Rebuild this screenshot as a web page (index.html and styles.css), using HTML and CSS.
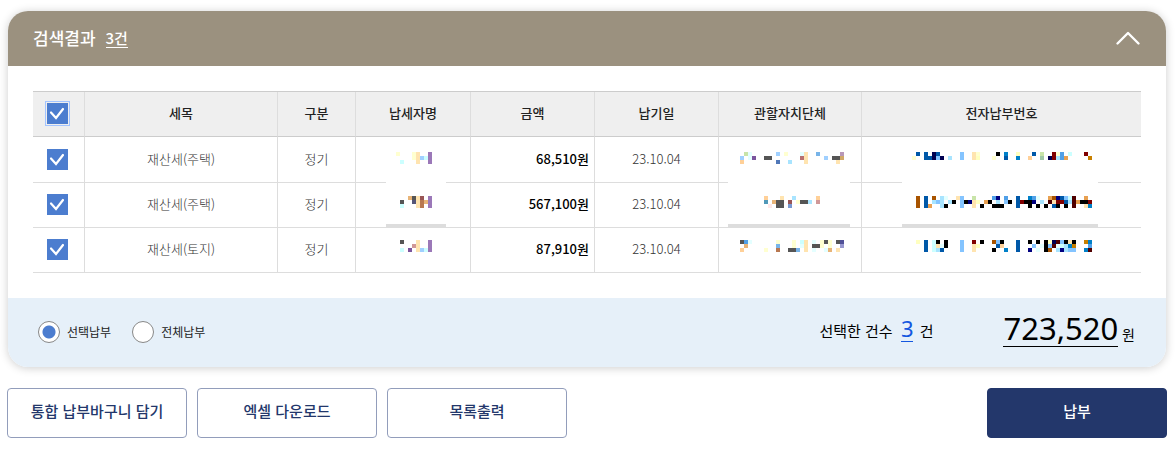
FILE: index.html
```html
<!DOCTYPE html>
<html lang="ko">

<head>
  <meta charset="utf-8">
  <meta name="viewport" content="width=device-width, initial-scale=1">
  <title>검색결과</title>
  <link rel="stylesheet" href="styles.css">
</head>

<body>
  <section class="panel">
    <header class="panel-head">
      <h2 class="title">검색결과</h2>
      <span class="count">3건</span>
      <button class="fold" aria-label="접기">
        <svg width="26" height="16" viewBox="0 0 26 16">
          <path d="M2.5 13.5 13 3 23.5 13.5" fill="none" stroke="#fff" stroke-width="2.4" stroke-linecap="round" stroke-linejoin="round"/>
        </svg>
      </button>
    </header>

    <div class="panel-body">
      <table class="tbl">
        <colgroup>
          <col class="col-check">
          <col class="col-item">
          <col class="col-kind">
          <col class="col-name">
          <col class="col-amount">
          <col class="col-date">
          <col class="col-office">
          <col>
        </colgroup>
        <thead>
          <tr>
            <th><input type="checkbox" class="check focused" aria-label="전체 선택" checked></th>
            <th>세목</th>
            <th>구분</th>
            <th>납세자명</th>
            <th>금액</th>
            <th>납기일</th>
            <th>관할자치단체</th>
            <th>전자납부번호</th>
          </tr>
        </thead>
        <tbody>
          <tr>
            <td><input type="checkbox" class="check" aria-label="선택" checked></td>
            <td>재산세(주택)</td>
            <td>정기</td>
            <td><svg class="mosaic" width="36" height="12" viewBox="-1 1 36 12" data-cells="name1"></svg></td>
            <td class="amount">68,510원</td>
            <td>23.10.04</td>
            <td><svg class="mosaic" width="104" height="12" viewBox="-2 1 104 12" data-cells="office1"></svg></td>
            <td><svg class="mosaic" width="180" height="12" viewBox="0 1 180 12" data-cells="number1"></svg></td>
          </tr>
          <tr>
            <td><input type="checkbox" class="check" aria-label="선택" checked></td>
            <td>재산세(주택)</td>
            <td>정기</td>
            <td>
              <svg class="mosaic" width="36" height="12" viewBox="-1 2 36 12" data-cells="name2">
                <path fill="#fff" d="M-10-16h60v44h-60z"/>
                <path fill="#ddd" d="M-10 28h60v3h-60z"/>
              </svg>
            </td>
            <td class="amount">567,100원</td>
            <td>23.10.04</td>
            <td>
              <svg class="mosaic" width="104" height="12" viewBox="-2 2 104 12" data-cells="office2">
                <path fill="#fff" d="M-12-16h122v44h-122z"/>
                <path fill="#ddd" d="M-12 28h122v3h-122z"/>
              </svg>
            </td>
            <td>
              <svg class="mosaic" width="180" height="12" viewBox="0 2 180 12" data-cells="number2">
                <path fill="#fff" d="M-10-16h196v44h-196z"/>
                <path fill="#ddd" d="M-10 28h196v3h-196z"/>
              </svg>
            </td>
          </tr>
          <tr>
            <td><input type="checkbox" class="check" aria-label="선택" checked></td>
            <td>재산세(토지)</td>
            <td>정기</td>
            <td><svg class="mosaic" width="36" height="12" viewBox="-1 3 36 12" data-cells="name3"></svg></td>
            <td class="amount">87,910원</td>
            <td>23.10.04</td>
            <td><svg class="mosaic" width="104" height="12" viewBox="-2 3 104 12" data-cells="office3"></svg></td>
            <td><svg class="mosaic" width="180" height="12" viewBox="0 3 180 12" data-cells="number3"></svg></td>
          </tr>
        </tbody>
      </table>
    </div>

    <footer class="panel-foot">
      <div class="options">
        <label class="option"><input type="radio" class="radio" name="pay" checked>선택납부</label>
        <label class="option"><input type="radio" class="radio" name="pay">전체납부</label>
      </div>
      <p class="picked">선택한 건수 <strong class="picked-num">3</strong> 건</p>
      <p class="total"><strong class="total-num">723,520</strong> 원</p>
    </footer>
  </section>

  <div class="actions">
    <button class="btn">통합 납부바구니 담기</button>
    <button class="btn">엑셀 다운로드</button>
    <button class="btn">목록출력</button>
    <button class="btn btn-pay">납부</button>
  </div>

  <script src="mosaic.js"></script>
</body>

</html>
```

FILE: styles.css
```css
* {
  box-sizing: border-box;
}

body {
  margin: 0;
  padding: 11px 8px 11px 7px;
  background: #fff;
  color: #222;
  font-family: "Noto Sans CJK KR", sans-serif;
  font-size: 13px;
  line-height: 20px;
}

button,
input {
  margin: 0;
  font-family: inherit;
}

.panel {
  margin: 0 1px;
  border-radius: 20px;
  overflow: hidden;
  background: #fff;
  box-shadow: 0 1px 10px rgba(0, 0, 0, 0.2);
}

.panel-head {
  display: flex;
  align-items: center;
  gap: 10px;
  height: 55px;
  padding: 0 25px 2px;
  background: #9b917f;
  color: #fff;
}

.title {
  margin: 0;
  font-size: 17px;
  font-weight: 500;
  line-height: 24px;
}

.count {
  border-bottom: 1px solid #fff;
  font-size: 15px;
  font-weight: 500;
  line-height: 19px;
}

.fold {
  display: flex;
  margin-left: auto;
  padding: 0;
  border: none;
  background: none;
  cursor: pointer;
}

.panel-body {
  padding: 25px;
}

.tbl {
  width: 100%;
  table-layout: fixed;
  border-collapse: separate;
  border-spacing: 0;
  border-top: 1px solid #ccc;
}

.col-check {
  width: 52px;
}

.col-item {
  width: 193px;
}

.col-kind {
  width: 78px;
}

.col-name {
  width: 115px;
}

.col-amount,
.col-date {
  width: 124px;
}

.col-office {
  width: 143px;
}

.tbl th,
.tbl td {
  height: 45px;
  padding: 0 5px 2px;
  border-right: 1px solid #ddd;
  border-bottom: 1px solid #ddd;
  text-align: center;
  vertical-align: middle;
}

.tbl th {
  border-bottom-color: #ccc;
  background: #efefef;
  font-weight: 500;
}

.tbl td {
  color: #333;
  font-weight: 300;
}

.tbl tbody tr:first-child td {
  height: 46px;
}

.tbl th:first-child,
.tbl td:first-child {
  padding: 0 7px 1px 5px;
}

.tbl th:last-child,
.tbl td:last-child {
  border-right: none;
}

.tbl .amount {
  color: #000;
  font-weight: 500;
  text-align: right;
}

.check {
  display: block;
  width: 21px;
  height: 21px;
  margin: auto;
  -webkit-appearance: none;
  appearance: none;
  border: 1px solid #999;
  background: #fff;
  cursor: pointer;
}

.check:checked {
  border: none;
  background: #4c7dcf url("data:image/svg+xml,%3Csvg xmlns='http://www.w3.org/2000/svg' width='21' height='21'%3E%3Cpath d='M4 9.5 9 15 16 6' fill='none' stroke='%23fff' stroke-width='2.2' stroke-linecap='round'/%3E%3C/svg%3E");
}

.check.focused {
  outline: 1px solid #a3c4ff;
  outline-offset: 1px;
}

.mosaic {
  display: block;
  margin: auto;
  overflow: visible;
  shape-rendering: crispEdges;
}

.panel-foot {
  display: flex;
  align-items: center;
  height: 69px;
  padding: 0 31px 2px 30px;
  background: #e6f0f9;
}

.options {
  display: flex;
  gap: 21px;
  margin-right: auto;
}

.option {
  display: flex;
  align-items: center;
  gap: 7px;
  font-size: 12px;
  cursor: pointer;
}

.radio {
  width: 22px;
  height: 22px;
  -webkit-appearance: none;
  appearance: none;
  border: 1px solid #888;
  border-radius: 50%;
  background: #fff;
}

.radio:checked {
  background: radial-gradient(circle, #4c7dcf 6px, #fff 7px);
}

.picked,
.total {
  margin: 0;
  padding-bottom: 6px;
  color: #000;
}

.picked {
  margin-right: 70px;
  font-size: 15px;
}

.picked-num,
.total-num {
  display: inline-block;
  border-bottom: 1px solid;
  font-family: "Noto Sans", sans-serif;
  font-weight: 400;
}

.picked-num {
  margin: 0 2px 0 4px;
  color: #1457e0;
  font-size: 22px;
  line-height: 26px;
}

.total {
  font-size: 14px;
}

.total-num {
  font-size: 31px;
  line-height: 36px;
}

.actions {
  display: flex;
  gap: 10px;
  margin-top: 21px;
}

.btn {
  width: 180px;
  height: 50px;
  padding: 0 0 6px;
  border: 1px solid #929dbb;
  border-radius: 4px;
  background: #fff;
  color: #23376b;
  font-size: 15px;
  font-weight: 500;
  cursor: pointer;
}

.btn-pay {
  margin-left: auto;
  border-color: #23376b;
  background: #23376b;
  color: #fff;
}
```

FILE: mosaic.js
```js
// masked personal data, drawn as 4px cells: "<column><colour>" for each of the three lines
const SIZE = 4;

const colors = {
  y: '#ffffd0', Y: '#ffffc0', o: '#ffe4b0', F: '#ffd098', t: '#e8b478', T: '#e8a050', d: '#d0a868', Q: '#c88000',
  W: '#a85400', n: '#b87850', r: '#995555', q: '#b87070', m: '#d09898', R: '#800000', X: '#500000', i: '#ffe8e8',
  e: '#e4ffff', c: '#ccffff', C: '#a8e4ff', b: '#a0d0ff', L: '#84c4ff', z: '#78b4e8', Z: '#50a0e8', D: '#0080c8',
  B: '#0058a8', h: '#5078b8', j: '#7898d0', u: '#5098b8', s: '#555577', a: '#505098', M: '#000080', N: '#000050',
  p: '#9b78b8', v: '#7b559d', w: '#b898b8', x: '#9898d0', G: '#c8e4a8', g: '#a0c8a8', k: '#555555', K: '#000000'
};

const mosaics = {
  name1: ['0y 4y 5o 8p', '4y 5o 6b 7c 8p', '1c 5o 8p'],
  name2: ['3t 4k 5o 6r 8p', '1k 4s 5o 6n 7t 8p', '1c 5o 6n 8p'],
  name3: ['1k 5o 8p', '4m 5o 8p', '1c 3v 5o 6b 7c 8p'],
  office1: [
    '1G 2e 9b 11y 15e 16o 19z 25w',
    '0b 2e 3v 6k 7k 15q 16o 21b 23k 24k 25d',
    '0F 9h 12C 16o 24o'
  ],
  office2: [
    '6F 10o 13C 19F',
    '6u 8t 9k 10k 12r 14y 15k 16k 17C 19m',
    '7i 9k 10k 12j'
  ],
  office3: [
    '0k 1Z 2e 9y 13y 15c 16o 18e 20y 21k 22y 24k 25a',
    '1t 9z 13y 15e 16o 18k 19k 20y 22y 25x',
    '0F 6y 9n 12k 13k 14z 16o 18e 21e 22t 24o'
  ],
  number1: [
    '1B 3B 5N 6B 12L 15o 16y 21K 23D 26Y 30B 32G 35R 36y 37Z 39c 43R',
    '0y 3B 4B 5N 6L 7N 9C 12L 15o 16Y 20y 23B 26D 29F 32g 34N 35R 36C 37Z 38T 44Q'
  ],
  number2: [
    '1W 3B 5W 7C 8e 11o 12L 15G 20Z 21M 23Z 26B 29D 30Z 31e 34T 35W 36M 37B 38L 39c 40X 43T',
    '1W 3B 5C 6L 7C 9C 10K 12L 13K 14M 15o 16Y 18T 19K 21C 23L 24K 26B 27R 28K 29K 30M 32C 34X 35o 36R 37R 38B 39C 40X 41T 42K 43K 44R',
    '1W 3B 4T 7C 8K 12L 15o 17K 20K 21K 22K 26B 29K 31K 33K 35B 36K 38K 40X 43o 44D'
  ],
  number3: [
    '1Y 3B 5c 6K 8K 12L 15R 17K 20W 21L 22K 26B 29K 31K 33K 34Y 35N 36X 37L 38K 39o 40K 43Q 44D',
    '3B 5c 6o 7e 8K 12L 15o 16Y 21B 22F 26B 30L 32e 33K 34L 35X 36e 37c 38C 39D 40Q 44Z',
    '3B 5c 6C 7B 12L 15o 20K 23D 26B 29M 31e 33K 34W 36C 37M 38C 39L 40L 43D 44X'
  ]
};

document.querySelectorAll('.mosaic').forEach(function (svg) {
  mosaics[svg.dataset.cells].forEach(function (line, row) {
    line.split(' ').forEach(function (cell) {
      let rect = document.createElementNS('http://www.w3.org/2000/svg', 'rect');
      rect.setAttribute('x', parseInt(cell) * SIZE);
      rect.setAttribute('y', row * SIZE);
      rect.setAttribute('width', SIZE);
      rect.setAttribute('height', SIZE);
      rect.setAttribute('fill', colors[cell.slice(-1)]);
      svg.appendChild(rect);
    });
  });
});
```
